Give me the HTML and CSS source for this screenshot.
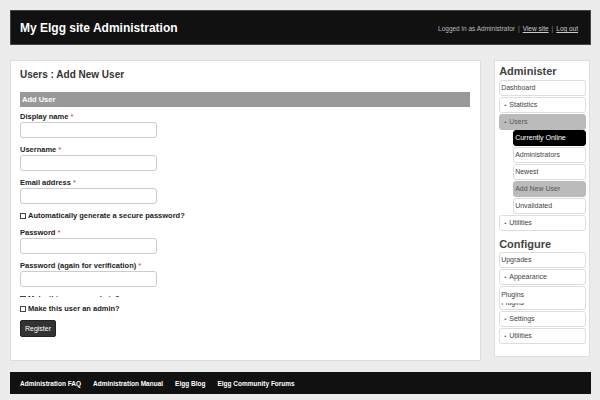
FILE: index.html
```html
<!DOCTYPE html>
<html>
<head>
<meta charset="utf-8">
<link rel="stylesheet" href="styles.css">
</head>
<body>
<div class="page">
  <header class="topbar">
    <h1 class="site-title">My Elgg site Administration</h1>
    <div class="user-links">
      <span>Logged in as Administrator</span><span class="sep">|</span><a href="#">View site</a><span class="sep">|</span><a href="#">Log out</a>
    </div>
  </header>

  <div class="layout">
    <main class="content">
      <h2 class="page-title">Users : Add New User</h2>
      <div class="section-bar">Add User</div>
      <form class="form">
        <div class="field">
          <label class="label">Display name <span class="req">*</span></label>
          <div class="input"></div>
        </div>
        <div class="field">
          <label class="label">Username <span class="req">*</span></label>
          <div class="input"></div>
        </div>
        <div class="field">
          <label class="label">Email address <span class="req">*</span></label>
          <div class="input"></div>
        </div>
        <div class="check-row check-auto"><span class="box"></span>Automatically generate a secure password?</div>
        <div class="field">
          <label class="label">Password <span class="req">*</span></label>
          <div class="input"></div>
        </div>
        <div class="field">
          <label class="label">Password (again for verification) <span class="req">*</span></label>
          <div class="input"></div>
        </div>
        <div class="clip-row"><div class="check-row"><span class="box"></span>Make this user an admin?</div></div>
        <div class="check-row check-admin"><span class="box"></span>Make this user an admin?</div>
        <button type="button" class="btn">Register</button>
      </form>
    </main>

    <aside class="sidebar">
      <h3 class="side-head">Administer</h3>
      <ul class="menu">
        <li class="item">Dashboard</li>
        <li class="item bullet">Statistics</li>
        <li class="item bullet selected">Users</li>
        <li class="sub">
          <ul class="menu">
            <li class="item current">Currently Online</li>
            <li class="item">Administrators</li>
            <li class="item">Newest</li>
            <li class="item selected">Add New User</li>
            <li class="item">Unvalidated</li>
          </ul>
        </li>
        <li class="item bullet">Utilities</li>
      </ul>
      <h3 class="side-head configure">Configure</h3>
      <ul class="menu">
        <li class="item">Upgrades</li>
        <li class="item bullet">Appearance</li>
        <li class="item tall"><span class="t1">Plugins</span><span class="t2"><span class="t2-in">Plugins</span></span></li>
        <li class="item bullet">Settings</li>
        <li class="item bullet">Utilities</li>
      </ul>
    </aside>
  </div>

  <footer class="footer">
    <a href="#">Administration FAQ</a>
    <a href="#">Administration Manual</a>
    <a href="#">Elgg Blog</a>
    <a href="#">Elgg Community Forums</a>
  </footer>
</div>
</body>
</html>
```

FILE: styles.css
```css
* { box-sizing: border-box; }
html, body { margin: 0; padding: 0; }
body {
  background: #ececec;
  font-family: "Liberation Sans", Arial, sans-serif;
  color: #333;
}
.page {
  padding: 10px 9px 0 10px;
  width: 600px;
}
.topbar {
  height: 35px;
  background: #111;
  border: 1px solid #444;
  display: flex;
  align-items: center;
  justify-content: space-between;
  padding: 0 12px 0 9px;
}
.site-title {
  margin: 0;
  font-size: 12px;
  font-weight: bold;
  color: #fff;
}
.user-links {
  font-size: 6.5px;
  color: #bbb;
  padding-top: 2px;
}
.user-links a { color: #ccc; text-decoration: underline; }
.user-links .sep { color: #888; margin: 0 3px; }

.layout {
  display: flex;
  gap: 13px;
  margin-top: 15px;
  width: 580px;
}
.content {
  width: 472px;
  height: 301px;
  background: #fff;
  border: 1px solid #ddd;
  padding: 7px 10px 10px 9px;
}
.page-title {
  margin: 0;
  font-size: 10px;
  line-height: 14px;
  font-weight: bold;
  color: #333;
}
.section-bar {
  margin-top: 10px;
  height: 15px;
  line-height: 15px;
  background: #999;
  color: #fff;
  font-size: 7.5px;
  font-weight: bold;
  padding-left: 2px;
}
.form { margin-top: 5px; }
.field { margin-bottom: 7px; }
.label {
  display: block;
  font-size: 7.5px;
  line-height: 10px;
  font-weight: bold;
  color: #222;
}
.req { color: #d33; font-weight: normal; }
.input {
  width: 137px;
  height: 16px;
  border: 1px solid #ccc;
  border-radius: 3px;
  background: #fff;
}
.check-row {
  display: flex;
  align-items: center;
  font-size: 7.5px;
  line-height: 10px;
  font-weight: bold;
  color: #222;
}
.box {
  width: 6px;
  height: 6px;
  border: 1px solid #444;
  margin-right: 2px;
  background: #fff;
}
.check-auto { margin-top: 3px; margin-bottom: 7px; }
.clip-row { height: 3px; overflow: hidden; margin-bottom: 7px; }
.check-admin { margin-bottom: 6px; }
.btn {
  display: block;
  width: 36px;
  height: 17px;
  padding: 0;
  background: #333;
  color: #fff;
  border: 1px solid #222;
  border-radius: 2px;
  font-family: "Liberation Sans", Arial, sans-serif;
  font-size: 7px;
}

.sidebar {
  width: 96px;
  height: 297px;
  background: #fff;
  border: 1px solid #ddd;
  padding: 3px 3px 0 4px;
}
.side-head {
  margin: 0 0 2px;
  font-size: 11px;
  line-height: 14px;
  font-weight: bold;
  color: #444;
}
.side-head.configure { margin-top: 6px; margin-bottom: 1px; }
.menu { list-style: none; margin: 0; padding: 0; }
.item {
  height: 16px;
  line-height: 14px;
  margin-bottom: 1px;
  border: 1px solid #ddd;
  border-radius: 3px;
  font-size: 7px;
  color: #444;
  padding-left: 1px;
  background: #fff;
  white-space: nowrap;
  overflow: hidden;
}
.item.bullet { padding-left: 4px; }
.item.bullet::before { content: "\2022"; font-size: 6px; margin-right: 3px; color: #555; }
.item.selected { background: #bbb; border-color: #bbb; color: #555; }
.item.current { background: #000; border-color: #000; color: #fff; }
.menu .item.selected.bullet { margin-bottom: 0; }
.sub { padding-left: 14px; }
.item.tall { height: 24px; padding-top: 1px; }
.item.tall .t1 { display: block; line-height: 14px; }
.item.tall .t2 {
  display: block;
  height: 4px;
  overflow: hidden;
  margin-top: 1px;
}
.item.tall .t2-in {
  display: block;
  line-height: 8px;
  margin-top: -4px;
}
.footer {
  margin-top: 11px;
  width: 581px;
  height: 22px;
  background: #111;
  display: flex;
  align-items: center;
  gap: 12px;
  padding-left: 10px;
}
.footer a {
  color: #fff;
  font-size: 6.5px;
  font-weight: bold;
  text-decoration: none;
}
```
